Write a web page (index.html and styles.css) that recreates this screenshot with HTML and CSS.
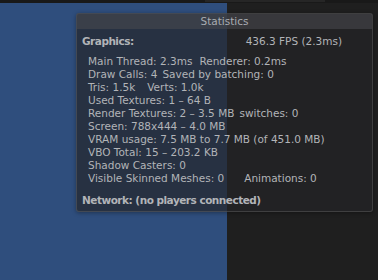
FILE: index.html
```html
<!DOCTYPE html>
<html>
<head>
<meta charset="utf-8">
<link rel="stylesheet" href="styles.css">
</head>
<body>
<div class="scene">
  <div class="topbar"><div class="tabseg"></div></div>
  <div class="views">
    <div class="game"></div>
    <div class="dark"></div>
  </div>
  <div class="stats">
    <div class="title">Statistics</div>
    <div class="body">
      <div class="head"><span class="bold">Graphics:</span><span class="fps">436.3 FPS (2.3ms)</span></div>
      <div class="lines">
        <div class="line">Main Thread: 2.3ms<span class="gap g1"></span>Renderer: 0.2ms</div>
        <div class="line">Draw Calls: 4<span class="gap g2"></span>Saved by batching: 0</div>
        <div class="line">Tris: 1.5k<span class="gap g3"></span>Verts: 1.0k</div>
        <div class="line">Used Textures: 1 – 64 B</div>
        <div class="line">Render Textures: 2 – 3.5 MB<span class="gap g2"></span>switches: 0</div>
        <div class="line">Screen: 788x444 – 4.0 MB</div>
        <div class="line">VRAM usage: 7.5 MB to 7.7 MB (of 451.0 MB)</div>
        <div class="line">VBO Total: 15 – 203.2 KB</div>
        <div class="line">Shadow Casters: 0</div>
        <div class="line">Visible Skinned Meshes: 0<span class="gap g4"></span>Animations: 0</div>
      </div>
      <div class="net bold">Network: (no players connected)</div>
    </div>
  </div>
</div>
</body>
</html>
```

FILE: styles.css
```css
* { box-sizing: border-box; }
html, body { margin: 0; padding: 0; }
body { width: 378px; height: 280px; overflow: hidden; background: #1e1e1e; font-family: "DejaVu Sans", sans-serif; }
.scene { position: relative; width: 378px; height: 280px; display: flex; flex-direction: column; }
.topbar { height: 3px; background: #191919; display: flex; }
.tabseg { margin-left: 205px; width: 120px; height: 2px; background: #262626; }
.views { flex: 1; display: flex; }
.game { width: 227px; background: #2f4e7d; }
.dark { flex: 1; background: #1f1f1f; }
.stats {
  position: absolute; left: 76px; top: 13px; width: 297px; height: 199px;
  background: rgba(36, 36, 38, 0.68);
  border: 1px solid rgba(120, 120, 120, 0.35);
  border-radius: 3px;
  box-shadow: 0 1px 4px rgba(0,0,0,0.35);
  color: #b2b4b8; font-size: 10.5px; line-height: 13px;
}
.title { height: 15px; background: rgba(75, 75, 80, 0.55); text-align: center; line-height: 15px; color: #a8acb2; }
.body { padding: 6px 0 0 5px; }
.head { display: flex; height: 14px; }
.bold { font-weight: bold; letter-spacing: -0.5px; }
.fps { margin-left: auto; margin-right: 30px; }
.lines { padding: 6px 0 0 6px; }
.line { white-space: pre; height: 13px; }
.gap { display: inline-block; }
.g1 { width: 7px; }
.g2 { width: 5px; }
.g3 { width: 12px; }
.g4 { width: 20px; }
.net { margin-top: 9px; }
```
